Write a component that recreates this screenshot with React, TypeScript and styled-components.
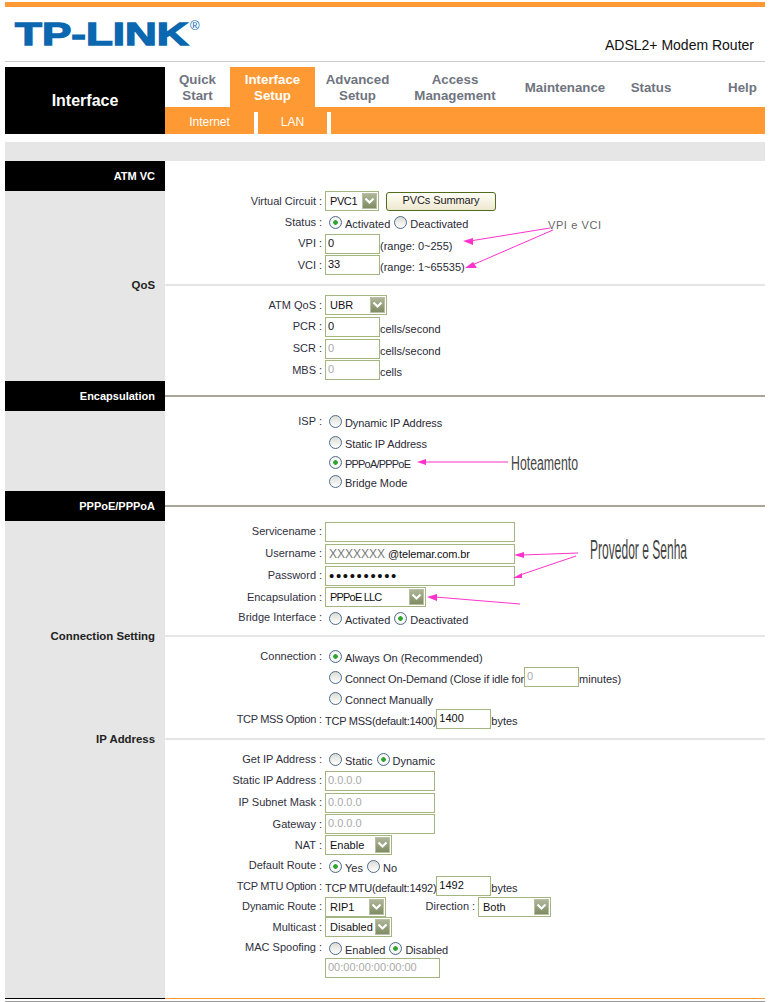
import React from "react";
import styled, { createGlobalStyle } from "styled-components";

const Global = createGlobalStyle`
  html, body { margin: 0; padding: 0; background: #fff; }
  * { box-sizing: border-box; }
  body { font-family: "Liberation Sans", Arial, sans-serif; font-size: 11px; color: #333; }
`;

const GRAY = "#e6e6e6";
const ORANGE = "#ff9933";
const BORDER = "#a3b67f";

const Page = styled.div`
  position: relative;
  width: 770px;
  height: 1002px;
  padding: 2px 5px 0;
  overflow: hidden;
`;
const TopBar = styled.div`
  height: 5px;
  background: ${ORANGE};
`;
const Brand = styled.header`
  height: 55px;
  border-bottom: 1px solid #ccc;
  display: flex;
  justify-content: space-between;
  align-items: flex-start;
`;
const Logo = styled.div`
  display: flex;
  align-items: flex-start;
  margin: 9px 0 0 10px;
  color: #0b68b0;
`;
const LogoWord = styled.span`
  display: block;
  width: 174px;
  font-size: 32px;
  line-height: 36px;
  font-weight: bold;
  white-space: nowrap;
  transform: scaleX(1.375);
  transform-origin: 0 50%;
  -webkit-text-stroke: 1.3px #0b68b0;
`;
const LogoMark = styled.span`
  font-size: 13px;
  line-height: 14px;
  margin: 3px 0 0 1px;
`;
const Model = styled.span`
  margin: 30px 11px 0 0;
  font-size: 14px;
  line-height: 16px;
  color: #111;
`;
const Nav = styled.nav`
  margin-top: 5px;
  height: 67px;
  display: flex;
`;
const NavTitle = styled.div`
  width: 160px;
  background: #000;
  color: #fff;
  font-size: 16px;
  font-weight: bold;
  display: flex;
  align-items: center;
  justify-content: center;
`;
const NavMain = styled.div`
  flex: 1;
  display: flex;
  flex-direction: column;
`;
const Tabs = styled.div`
  height: 40px;
  display: flex;
`;
const Tab = styled.div<{ $w: number; $active?: boolean; $end?: boolean }>`
  width: ${(p) => p.$w}px;
  margin-left: ${(p) => (p.$end ? "auto" : "0")};
  padding-top: 2px;
  background: ${(p) => (p.$active ? ORANGE : "transparent")};
  color: ${(p) => (p.$active ? "#fff" : "#6f7480")};
  font-size: 13.3px;
  font-weight: bold;
  line-height: 16px;
  text-align: center;
  display: flex;
  align-items: center;
  justify-content: center;
`;
const SubNav = styled.div`
  flex: 1;
  background: ${ORANGE};
  display: flex;
  align-items: flex-end;
`;
const SubTab = styled.div<{ $w: number }>`
  width: ${(p) => p.$w}px;
  height: 22px;
  color: #fff;
  font-size: 12px;
  line-height: 20px;
  text-align: center;
  border-right: 4px solid #fff;
`;
const Band = styled.div`
  margin-top: 8px;
  height: 19px;
  background: ${GRAY};
`;
const RowBox = styled.div<{ $h: number }>`
  height: ${(p) => p.$h}px;
  display: flex;
  align-items: center;
`;
const Side = styled.div`
  width: 160px;
  height: 100%;
  flex: none;
  background: ${GRAY};
`;
const HeadRow = styled.div`
  height: 30px;
  display: flex;
  align-items: center;
`;
const HeadLabel = styled.div`
  width: 160px;
  height: 100%;
  flex: none;
  background: #000;
  color: #fff;
  font-weight: bold;
  line-height: 30px;
  text-align: right;
  padding-right: 10px;
`;
const HeadLine = styled.div`
  flex: 1;
  height: 2px;
  background: #a8a698;
`;
const RuleRow = styled.div<{ $h: number }>`
  height: ${(p) => p.$h}px;
  display: flex;
  align-items: flex-start;
`;
const RuleSide = styled.div<{ $top: number }>`
  width: 160px;
  height: 100%;
  flex: none;
  background: ${GRAY};
  color: #222;
  font-size: 11.4px;
  font-weight: bold;
  text-align: right;
  padding: ${(p) => p.$top - 6}px 10px 0 0;
  line-height: 14px;
`;
const RuleLine = styled.div<{ $top: number }>`
  flex: 1;
  height: 2px;
  margin-top: ${(p) => p.$top}px;
  background: ${GRAY};
`;
const Label = styled.div<{ $ls?: number }>`
  width: 151px;
  flex: none;
  margin-bottom: 2px;
  text-align: right;
  line-height: 14px;
  white-space: nowrap;
  color: #2f2f3d;
  letter-spacing: ${(p) => p.$ls ?? 0}px;
`;
const DirectionLabel = styled(Label)`
  width: 83px;
`;
const Colon = styled.div`
  width: 9px;
  flex: none;
  margin-bottom: 2px;
  padding-left: 3px;
  line-height: 14px;
  color: #2f2f3d;
`;
const Value = styled.div`
  flex: 1;
  display: flex;
  align-items: center;
  white-space: nowrap;
  line-height: 14px;
`;
const Text = styled.span<{ $ls?: number }>`
  padding-top: 3px;
  color: #2a2a35;
  letter-spacing: ${(p) => p.$ls ?? 0}px;
`;
const Field = styled.input<{ $w: number }>`
  width: ${(p) => p.$w}px;
  height: 20px;
  flex: none;
  margin: 0 0 1px;
  border: 1px solid ${BORDER};
  background: #fff;
  padding: 0 0 2px 2px;
  outline: none;
  font: 11px "Liberation Sans", Arial, sans-serif;
  color: #111;
  &:disabled {
    color: #aaa;
    opacity: 1;
  }
`;
const Secret = styled(Field)`
  font-size: 15px;
  letter-spacing: 1.65px;
  padding: 0 0 0 3px;
`;
const FieldBox = styled.div`
  width: 190px;
  height: 20px;
  margin-bottom: 1px;
  border: 1px solid ${BORDER};
  padding-left: 3px;
  display: flex;
  align-items: center;
  gap: 3px;
  color: #111;
`;
const Masked = styled.span`
  font-size: 12px;
  color: #777;
`;
const Domain = styled.span`
  letter-spacing: -0.15px;
`;
const Select = styled.div<{ $w: number; $ls?: number }>`
  width: ${(p) => p.$w}px;
  height: 20px;
  flex: none;
  margin-bottom: 1px;
  border: 1px solid ${BORDER};
  padding: 0 1px 0 4px;
  display: flex;
  align-items: center;
  justify-content: space-between;
  color: #111;
  letter-spacing: ${(p) => p.$ls ?? 0}px;
`;
const Arrow = styled.span`
  width: 15px;
  height: 16px;
  flex: none;
  display: flex;
  align-items: center;
  justify-content: center;
  background: linear-gradient(#aeb598, #7f8c63);
  border: 1px solid #b9bfa5;
`;
const Button = styled.button`
  width: 110px;
  height: 19px;
  margin: 0 0 1px 7px;
  padding: 0 0 2px;
  border: 1px solid #4f6d1d;
  border-radius: 3px;
  background: linear-gradient(#fffef8, #eee8cf);
  font: 11px "Liberation Sans", Arial, sans-serif;
  letter-spacing: -0.1px;
  color: #222;
`;
const RadioDot = styled.span<{ $on?: boolean; $ml?: number }>`
  width: 13px;
  height: 13px;
  flex: none;
  margin: 0 3px 0 ${(p) => p.$ml ?? 0}px;
  border-radius: 50%;
  border: 1px solid #4e6c8c;
  background: ${(p) =>
    p.$on
      ? "radial-gradient(circle, #2fa52f 0 2px, #fff 2.6px, #e3e3dc 100%)"
      : "linear-gradient(#dcdcd6, #fff)"};
`;
const Foot = styled.div`
  display: flex;
  height: 1px;
`;
const FootSide = styled.div`
  width: 160px;
  background: #000;
`;
const FootRest = styled.div`
  flex: 1;
  background: ${ORANGE};
`;
const FootLine = styled.div`
  margin-top: 2px;
  height: 1px;
  background: #999;
`;
const Marks = styled.svg`
  position: absolute;
  left: 0;
  top: 0;
  pointer-events: none;
`;
const Note = styled.span<{ $x: number; $y: number; $size: number; $sx: number; $c: string; $ls?: number }>`
  position: absolute;
  left: ${(p) => p.$x}px;
  top: ${(p) => p.$y}px;
  font-size: ${(p) => p.$size}px;
  line-height: 1;
  color: ${(p) => p.$c};
  letter-spacing: ${(p) => p.$ls ?? 0}px;
  white-space: nowrap;
  transform: scaleX(${(p) => p.$sx});
  transform-origin: 0 0;
`;

const Row = ({ h, label, ls, children }: { h: number; label?: string; ls?: number; children?: React.ReactNode }) => (
  <RowBox $h={h}>
    <Side />
    <Label $ls={ls}>{label}</Label>
    <Colon>{label ? ":" : ""}</Colon>
    <Value>{children}</Value>
  </RowBox>
);
const Sel = ({ w, ls, children }: { w: number; ls?: number; children: React.ReactNode }) => (
  <Select $w={w} $ls={ls}>
    <span>{children}</span>
    <Arrow>
      <svg width="11" height="8" viewBox="0 0 11 8">
        <path d="M1.5 1.5 L5.5 5.5 L9.5 1.5" fill="none" stroke="#fff" strokeWidth="2.2" />
      </svg>
    </Arrow>
  </Select>
);
const Radio = ({ on, ml = 4, ls, children }: { on?: boolean; ml?: number; ls?: number; children: React.ReactNode }) => (
  <>
    <RadioDot $on={on} $ml={ml} />
    <Text $ls={ls}>{children}</Text>
  </>
);
const Rule = ({ h, top, label }: { h: number; top: number; label: string }) => (
  <RuleRow $h={h}>
    <RuleSide $top={top}>{label}</RuleSide>
    <RuleLine $top={top} />
  </RuleRow>
);
const Head = ({ label, line }: { label: string; line?: boolean }) => (
  <HeadRow>
    <HeadLabel>{label}</HeadLabel>
    {line && <HeadLine />}
  </HeadRow>
);
const Arrowhead = ({ d }: { d: string }) => <path d={d} fill="#ff33cc" />;

export default function App() {
  return (
    <Page>
      <Global />
      <TopBar />
      <Brand>
        <Logo>
          <LogoWord>TP-LINK</LogoWord>
          <LogoMark>®</LogoMark>
        </Logo>
        <Model>ADSL2+ Modem Router</Model>
      </Brand>
      <Nav>
        <NavTitle>Interface</NavTitle>
        <NavMain>
          <Tabs>
            <Tab $w={65}>Quick<br />Start</Tab>
            <Tab $w={85} $active>Interface<br />Setup</Tab>
            <Tab $w={85}>Advanced<br />Setup</Tab>
            <Tab $w={110}>Access<br />Management</Tab>
            <Tab $w={110}>Maintenance</Tab>
            <Tab $w={62}>Status</Tab>
            <Tab $w={45} $end>Help</Tab>
          </Tabs>
          <SubNav>
            <SubTab $w={93}>Internet</SubTab>
            <SubTab $w={73}>LAN</SubTab>
          </SubNav>
        </NavMain>
      </Nav>
      <Band />
      <Head label="ATM VC" />
      <Row h={21} label="Virtual Circuit">
        <Sel w={54} ls={-0.4}>PVC1</Sel>
        <Button>PVCs Summary</Button>
      </Row>
      <Row h={21} label="Status">
        <Radio on>Activated</Radio>
        <Radio>Deactivated</Radio>
      </Row>
      <Row h={22} label="VPI">
        <Field $w={55} defaultValue="0" />
        <Text>(range: 0~255)</Text>
      </Row>
      <Row h={21} label="VCI">
        <Field $w={55} defaultValue="33" />
        <Text>(range: 1~65535)</Text>
      </Row>
      <Rule h={19} top={8} label="QoS" />
      <Row h={21} label="ATM QoS">
        <Sel w={62}>UBR</Sel>
      </Row>
      <Row h={22} label="PCR">
        <Field $w={55} defaultValue="0" />
        <Text>cells/second</Text>
      </Row>
      <Row h={22} label="SCR">
        <Field $w={55} defaultValue="0" disabled />
        <Text>cells/second</Text>
      </Row>
      <Row h={21} label="MBS">
        <Field $w={55} defaultValue="0" disabled />
        <Text>cells</Text>
      </Row>
      <Head label="Encapsulation" line />
      <Row h={21} label="ISP">
        <Radio ls={-0.1}>Dynamic IP Address</Radio>
      </Row>
      <Row h={20}>
        <Radio ls={-0.1}>Static IP Address</Radio>
      </Row>
      <Row h={20}>
        <Radio on ls={-0.8}>PPPoA/PPPoE</Radio>
      </Row>
      <Row h={19}>
        <Radio>Bridge Mode</Radio>
      </Row>
      <Head label="PPPoE/PPPoA" line />
      <Row h={22} label="Servicename">
        <Field $w={190} />
      </Row>
      <Row h={22} label="Username">
        <FieldBox>
          <Masked>XXXXXXX</Masked>
          <Domain>@telemar.com.br</Domain>
        </FieldBox>
      </Row>
      <Row h={22} label="Password">
        <Secret $w={190} type="password" defaultValue="0123456789" />
      </Row>
      <Row h={21} label="Encapsulation">
        <Sel w={101} ls={-0.8}>PPPoE LLC</Sel>
      </Row>
      <Row h={20} label="Bridge Interface">
        <Radio>Activated</Radio>
        <Radio on>Deactivated</Radio>
      </Row>
      <Rule h={18} top={7} label="Connection Setting" />
      <Row h={21} label="Connection">
        <Radio on>Always On (Recommended)</Radio>
      </Row>
      <Row h={21}>
        <Radio ls={-0.12}>Connect On-Demand (Close if idle for</Radio>
        <Field $w={55} defaultValue="0" disabled />
        <Text>minutes)</Text>
      </Row>
      <Row h={21}>
        <Radio>Connect Manually</Radio>
      </Row>
      <Row h={21} label="TCP MSS Option" ls={-0.35}>
        <Text $ls={-0.25}>TCP MSS(default:1400)</Text>
        <Field $w={55} defaultValue="1400" />
        <Text>bytes</Text>
      </Row>
      <Rule h={19} top={8} label="IP Address" />
      <Row h={21} label="Get IP Address">
        <Radio>Static</Radio>
        <Radio on>Dynamic</Radio>
      </Row>
      <Row h={22} label="Static IP Address">
        <Field $w={110} defaultValue="0.0.0.0" disabled />
      </Row>
      <Row h={22} label="IP Subnet Mask">
        <Field $w={110} defaultValue="0.0.0.0" disabled />
      </Row>
      <Row h={21} label="Gateway">
        <Field $w={110} defaultValue="0.0.0.0" disabled />
      </Row>
      <Row h={21} label="NAT">
        <Sel w={67}>Enable</Sel>
      </Row>
      <Row h={20} label="Default Route">
        <Radio on>Yes</Radio>
        <Radio>No</Radio>
      </Row>
      <Row h={21} label="TCP MTU Option" ls={-0.35}>
        <Text $ls={-0.25}>TCP MTU(default:1492)</Text>
        <Field $w={55} defaultValue="1492" />
        <Text>bytes</Text>
      </Row>
      <Row h={20} label="Dynamic Route" ls={-0.1}>
        <Sel w={61}>RIP1</Sel>
        <DirectionLabel>Direction</DirectionLabel>
        <Colon>:</Colon>
        <Sel w={73}>Both</Sel>
      </Row>
      <Row h={21} label="Multicast">
        <Sel w={67}>Disabled</Sel>
      </Row>
      <Row h={20} label="MAC Spoofing">
        <Radio>Enabled</Radio>
        <Radio on>Disabled</Radio>
      </Row>
      <Row h={21}>
        <Field $w={115} defaultValue="00:00:00:00:00:00" disabled />
      </Row>
      <Row h={19} />
      <Foot>
        <FootSide />
        <FootRest />
      </Foot>
      <FootLine />

      <Marks width="770" height="1002" viewBox="0 0 770 1002">
        <g fill="none" stroke="#ff33cc" strokeWidth="1">
          <path d="M550 228 L470 241" />
          <path d="M553 230 L470 266" />
          <path d="M508 462 L424 462" />
          <path d="M578 553 L522 555" />
          <path d="M576 556 L520 575" />
          <path d="M520 604 L435 597" />
        </g>
        <Arrowhead d="M463 241 L473 238 L473 245 Z" />
        <Arrowhead d="M465 268 L473 262 L477 268 Z" />
        <Arrowhead d="M417 462 L426 459 L426 465 Z" />
        <Arrowhead d="M514 555 L524 552 L524 558 Z" />
        <Arrowhead d="M513 578 L522 573 L522 578 Z" />
        <Arrowhead d="M427 597 L437 594 L437 601 Z" />
      </Marks>
      <Note $x={548} $y={220} $size={11} $sx={1} $c="#666" $ls={0.6}>VPI e VCI</Note>
      <Note $x={511} $y={453} $size={20} $sx={0.615} $c="#444">Hoteamento</Note>
      <Note $x={590} $y={536} $size={28} $sx={0.43} $c="#444">Provedor e Senha</Note>
    </Page>
  );
}
